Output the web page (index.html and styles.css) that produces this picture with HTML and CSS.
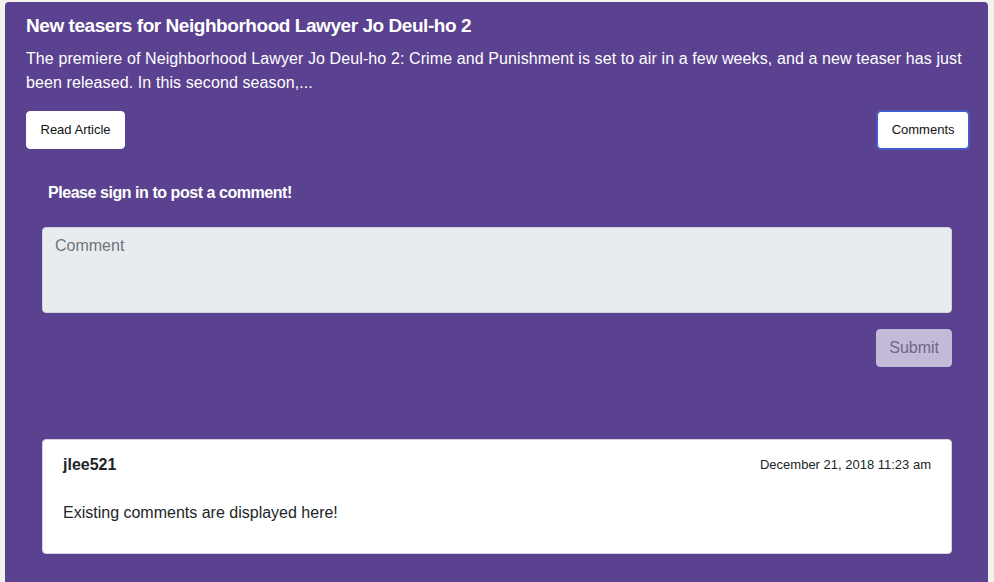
FILE: index.html
```html
<!DOCTYPE html>
<html>
<head>
<meta charset="utf-8">
<link rel="stylesheet" href="styles.css">
</head>
<body>
<div class="card">
  <h5 class="title">New teasers for Neighborhood Lawyer Jo Deul-ho 2</h5>
  <p class="summary">The premiere of Neighborhood Lawyer Jo Deul-ho 2: Crime and Punishment is set to air in a few weeks, and a new teaser has just been released. In this second season,...</p>
  <div class="actions">
    <button class="btn">Read Article</button>
    <button class="btn focused">Comments</button>
  </div>
  <div class="comments">
    <p class="signin">Please sign in to post a comment!</p>
    <textarea class="input" placeholder="Comment"></textarea>
    <div class="submit-row">
      <button class="submit" disabled>Submit</button>
    </div>
    <div class="comment">
      <div class="comment-head">
        <span class="user">jlee521</span>
        <span class="date">December 21, 2018 11:23 am</span>
      </div>
      <p class="comment-text">Existing comments are displayed here!</p>
    </div>
  </div>
</div>
</body>
</html>
```
FILE: styles.css
```css
html, body {
  height: 100%;
}
body {
  margin: 0;
  padding: 2px 6px 0 5px;
  box-sizing: border-box;
  background: #f4f2ee;
  font-family: "Liberation Sans", Arial, sans-serif;
  overflow: hidden;
}
.card {
  background: #5a4290;
  border-radius: 4px;
  padding: 12px 19px 27px 21px;
  color: #fff;
  height: 600px;
  box-sizing: border-box;
}
.title {
  margin: 0 0 9px;
  font-size: 19px;
  line-height: 24px;
  font-weight: 700;
  letter-spacing: -0.45px;
}
.summary {
  margin: 0 0 16px;
  font-size: 16px;
  line-height: 24px;
  letter-spacing: 0.1px;
}
.actions {
  display: flex;
  justify-content: space-between;
  align-items: center;
}
.btn {
  font-family: "Liberation Sans", Arial, sans-serif;
  background: #fff;
  color: #111;
  border: 1px solid #fff;
  border-radius: 4px;
  font-size: 13px;
  line-height: 18px;
  padding: 9px 13.5px;
  margin: 0;
}
.focused {
  border-color: #3c5ccc;
  box-shadow: 0 0 0 1px rgba(70, 100, 210, 0.7);
}
.comments {
  padding: 32px 17px 0 16px;
}
.signin {
  margin: 0 0 22px 6px;
  font-size: 16px;
  line-height: 24px;
  font-weight: 700;
  letter-spacing: -0.45px;
}
.input {
  display: block;
  width: 100%;
  box-sizing: border-box;
  height: 86px;
  background: #e9ecef;
  border: 1px solid #ced4da;
  border-radius: 4px;
  padding: 6px 12px;
  font-family: "Liberation Sans", Arial, sans-serif;
  font-size: 16px;
  line-height: 24px;
  resize: none;
  margin: 0;
}
.input::placeholder {
  color: #6c757d;
}
.submit-row {
  display: flex;
  justify-content: flex-end;
  margin-top: 16px;
}
.submit {
  font-family: "Liberation Sans", Arial, sans-serif;
  background: #c3bad7;
  color: #6d6786;
  border: 1px solid #c3bad7;
  border-radius: 4px;
  font-size: 16px;
  line-height: 24px;
  padding: 6px 12px;
  margin: 0;
}
.comment {
  margin-top: 72px;
  background: #fff;
  border: 1px solid #d6d3de;
  border-radius: 4px;
  padding: 13px 20px 12px 20px;
  color: #212529;
}
.comment-head {
  display: flex;
  justify-content: space-between;
  align-items: center;
  margin-bottom: 24px;
  line-height: 24px;
}
.user {
  font-size: 16px;
  font-weight: 700;
}
.date {
  font-size: 13px;
}
.comment-text {
  margin: 0 0 16px;
  font-size: 16px;
  line-height: 24px;
}
```
